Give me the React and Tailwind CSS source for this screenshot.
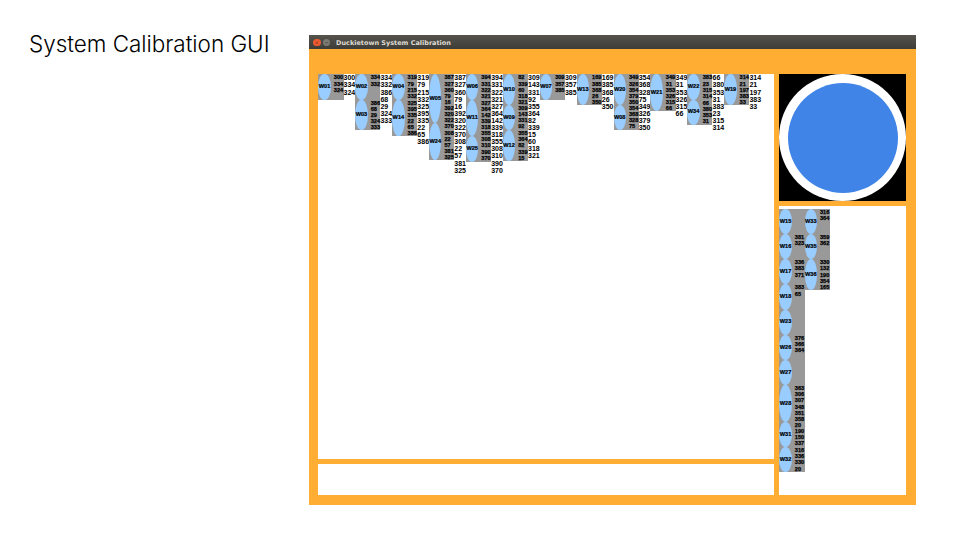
const ROW = 6.13;
const MIN_HEIGHT = 25.2;

const assigned = [
  { robots: [['W01', '300 334 324']], tags: '300 334 324' },
  { robots: [['W02', '334 332'], ['W03', '386 68 29 324 333']], tags: '334 332 386 68 29 324 333' },
  { robots: [['W04', '319 79 215 332'], ['W14', '325 395 335 22 65 386']], tags: '319 79 215 332 325 395 335 22 65 386' },
  { robots: [['W05', '387 327 360 79 16 392 320 322'], ['W24', '370 308 22 57 381 325']], tags: '387 327 360 79 16 392 320 322 370 308 22 57 381 325' },
  { robots: [['W06', '394 331 322 321'], ['W11', '327 364 142 339 318 355'], ['W25', '308 310 390 370']], tags: '394 331 322 321 327 364 142 339 318 355 308 310 390 370' },
  { robots: [['W10', '82 339 60 318 321'], ['W09', '309 143 331 92'], ['W12', '355 364 82 339 15']], tags: '309 143 331 92 355 364 82 339 15 60 318 321' },
  { robots: [['W07', '309 357 385']], tags: '309 357 385' },
  { robots: [['W13', '169 385 368 26 350']], tags: '169 385 368 26 350' },
  { robots: [['W20', '349 326 354 379 350'], ['W08', '354 368 328 75']], tags: '354 368 328 75 349 326 379 350' },
  { robots: [['W21', '349 31 353 326 315 66']], tags: '349 31 353 326 315 66' },
  { robots: [['W22', '383 23 315 314'], ['W34', '66 380 353 31']], tags: '66 380 353 31 383 23 315 314' },
  { robots: [['W19', '314 21 197 383 33']], tags: '314 21 197 383 33' },
];

const pending = [
  [['W15', ''], ['W16', '381 323'], ['W17', '336 383 371'], ['W18', '383 65'], ['W23', ''], ['W26', '376 366 364'], ['W27', ''], ['W28', '363 306 307 348 351 358'], ['W31', '20 190 150 337'], ['W32', '316 336 330 20']],
  [['W33', '316 364'], ['W35', '359 362'], ['W36', '330 132 190 354 165']],
];

function Robot({ name, tags }) {
  const list = tags ? tags.split(' ') : [];
  return (
    <div className="flex w-full bg-[#999999]" style={{ height: Math.max(MIN_HEIGHT, list.length * ROW) }}>
      <div className="flex w-[12.4px] shrink-0 items-center justify-center rounded-[50%] bg-[#99ccff] text-[5.6px] leading-none text-black [-webkit-text-stroke:0.2px_black]">
        {name}
      </div>
      <div className="pl-[3px] text-[5.6px] leading-[6.13px] text-black [-webkit-text-stroke:0.25px_black]">
        {list.map((t, i) => <div key={i}>{t}</div>)}
      </div>
    </div>
  );
}

function RobotColumn({ robots }) {
  return (
    <div className="w-[25.2px] shrink-0">
      {robots.map(([name, tags]) => <Robot key={name} name={name} tags={tags} />)}
    </div>
  );
}

export default function App() {
  return (
    <div className="flex h-[540px] w-[960px] overflow-hidden bg-white">
      <h1 className="w-[309px] shrink-0 pl-[29px] pt-[30px] font-[Inter,'Liberation_Sans',sans-serif] text-[22.5px] font-light leading-[28px] tracking-[-0.03px] whitespace-nowrap text-black">
        System Calibration GUI
      </h1>
      <div className="mt-[35px] flex h-[470px] w-[607px] flex-col bg-[#ffad33]">
        <div className="flex h-[14px] shrink-0 items-center bg-linear-to-b from-[#55534c] to-[#3d3c37] pl-[4px] pt-[1px]">
          <span className="flex size-[7.5px] items-center justify-center rounded-full bg-[#ee5a32]">
            <svg viewBox="0 0 8 8" className="size-[7.5px]"><path d="M2.7 2.7l2.6 2.6M5.3 2.7L2.7 5.3" stroke="#9a3a20" strokeWidth="0.9" /></svg>
          </span>
          <span className="ml-[2px] flex size-[7.5px] items-center justify-center rounded-full bg-[#7c7a72]">
            <svg viewBox="0 0 8 8" className="size-[7.5px]"><path d="M2.4 4h3.2" stroke="#504e48" strokeWidth="0.9" /></svg>
          </span>
          <span className="ml-[6px] pt-[1px] font-['DejaVu_Sans',sans-serif] text-[6.5px] font-bold leading-[12px] whitespace-nowrap text-[#dfdbd2]">
            Duckietown System Calibration
          </span>
        </div>
        <div className="flex gap-[5px] pl-[9.4px] pt-[25.4px] font-['Liberation_Sans',sans-serif] font-bold">
          <div className="flex w-[456px] flex-col gap-[5px]">
            <div className="flex h-[385px] bg-white">
              {assigned.map((col, i) => (
                <div key={i} className="flex w-[36.9px] shrink-0">
                  <RobotColumn robots={col.robots} />
                  <div className="text-[7px] leading-[7.1px] text-black">
                    {col.tags.split(' ').map((t, j) => <div key={j}>{t}</div>)}
                  </div>
                </div>
              ))}
            </div>
            <div className="h-[30.6px] bg-white" />
          </div>
          <div className="flex w-[127px] flex-col gap-[5px]">
            <div className="flex h-[127px] items-center justify-center bg-black">
              <div className="flex size-[127px] items-center justify-center rounded-full bg-white">
                <div className="size-[110px] rounded-full bg-[#4084e8]" />
              </div>
            </div>
            <div className="flex h-[289px] bg-white pt-[2.5px]">
              {pending.map((robots, i) => <RobotColumn key={i} robots={robots} />)}
            </div>
          </div>
        </div>
      </div>
    </div>
  );
}
